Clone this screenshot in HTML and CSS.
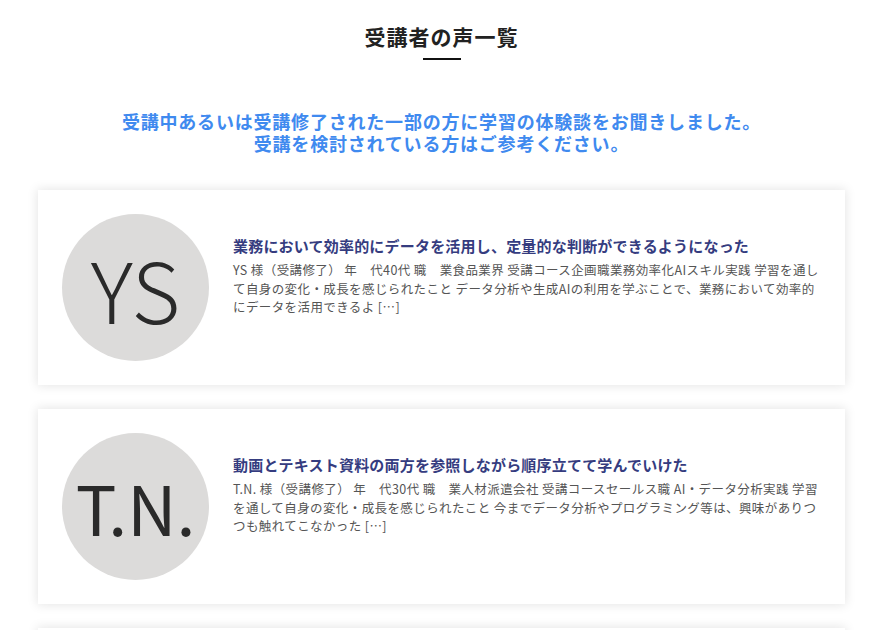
FILE: index.html
```html
<!DOCTYPE html>
<html lang="ja">
<head>
    <meta charset="UTF-8">
    <meta name="viewport" content="width=device-width, initial-scale=1.0">
    <title>受講者の声一覧</title>
    <link rel="stylesheet" href="styles.css">
</head>
<body>
    <header class="page-head">
        <h1>受講者の声一覧</h1>
        <p class="lead">受講中あるいは受講修了された一部の方に学習の体験談をお聞きしました。<br>受講を検討されている方はご参考ください。</p>
    </header>
    <main class="voices">
        <article class="voice">
            <div class="avatar avatar-light">YS</div>
            <div class="voice-body">
                <h2>業務において効率的にデータを活用し、定量的な判断ができるようになった</h2>
                <p>YS 様（受講修了） 年　代40代 職　業食品業界 受講コース企画職業務効率化AIスキル実践 学習を通して自身の変化・成長を感じられたこと データ分析や生成AIの利用を学ぶことで、業務において効率的にデータを活用できるよ […]</p>
            </div>
        </article>
        <article class="voice">
            <div class="avatar">T.N.</div>
            <div class="voice-body">
                <h2>動画とテキスト資料の両方を参照しながら順序立てて学んでいけた</h2>
                <p>T.N. 様（受講修了） 年　代30代 職　業人材派遣会社 受講コースセールス職 AI・データ分析実践 学習を通して自身の変化・成長を感じられたこと 今までデータ分析やプログラミング等は、興味がありつつも触れてこなかった […]</p>
            </div>
        </article>
        <article class="voice">
            <div class="avatar">K.M.</div>
            <div class="voice-body">
                <h2>実務に直結する内容を自分のペースで学ぶことができた</h2>
                <p>K.M. 様（受講修了） 年　代30代 職　業製造業 受講コース企画職業務効率化AIスキル実践 […]</p>
            </div>
        </article>
    </main>
</body>
</html>
```

FILE: styles.css
```css
body {
    font-family: "Noto Sans CJK JP", "Noto Sans", sans-serif;
    margin: 0;
    padding: 0;
    background-color: #fff;
    color: #222;
}
.page-head {
    text-align: center;
    padding-top: 20px;
}
.page-head h1 {
    margin: 0;
    font-size: 21px;
    line-height: 32px;
    letter-spacing: 1px;
    font-weight: bold;
    color: #222;
}
.page-head h1::after {
    content: "";
    display: block;
    width: 38px;
    height: 2px;
    margin: 6px auto 0;
    background-color: #111;
}
.lead {
    margin: 50px 0 0;
    font-size: 18px;
    line-height: 22px;
    letter-spacing: 0.8px;
    font-weight: bold;
    color: #3f8aef;
}
.voices {
    width: 807px;
    margin: 36px auto 0;
}
.voice {
    display: flex;
    align-items: flex-start;
    gap: 24px;
    padding: 24px;
    margin-bottom: 24px;
    background-color: #fff;
    box-shadow: 0 0 10px 1px rgba(0, 0, 0, 0.1);
}
.avatar {
    flex: 0 0 147px;
    height: 147px;
    border-radius: 50%;
    background-color: #dcdbda;
    color: #2a2a2a;
    display: flex;
    align-items: center;
    justify-content: center;
    font-size: 68px;
    font-weight: 400;
}
.avatar-light {
    font-size: 84px;
    font-weight: 300;
}
.voice-body {
    margin-top: 21px;
}
.voice-body h2 {
    margin: 0 0 4px;
    font-size: 15px;
    line-height: 22px;
    letter-spacing: 0.2px;
    font-weight: bold;
    color: #353c7f;
}
.voice-body p {
    margin: 0;
    font-size: 12.5px;
    line-height: 18.5px;
    letter-spacing: 0.4px;
    color: #555;
}
```
